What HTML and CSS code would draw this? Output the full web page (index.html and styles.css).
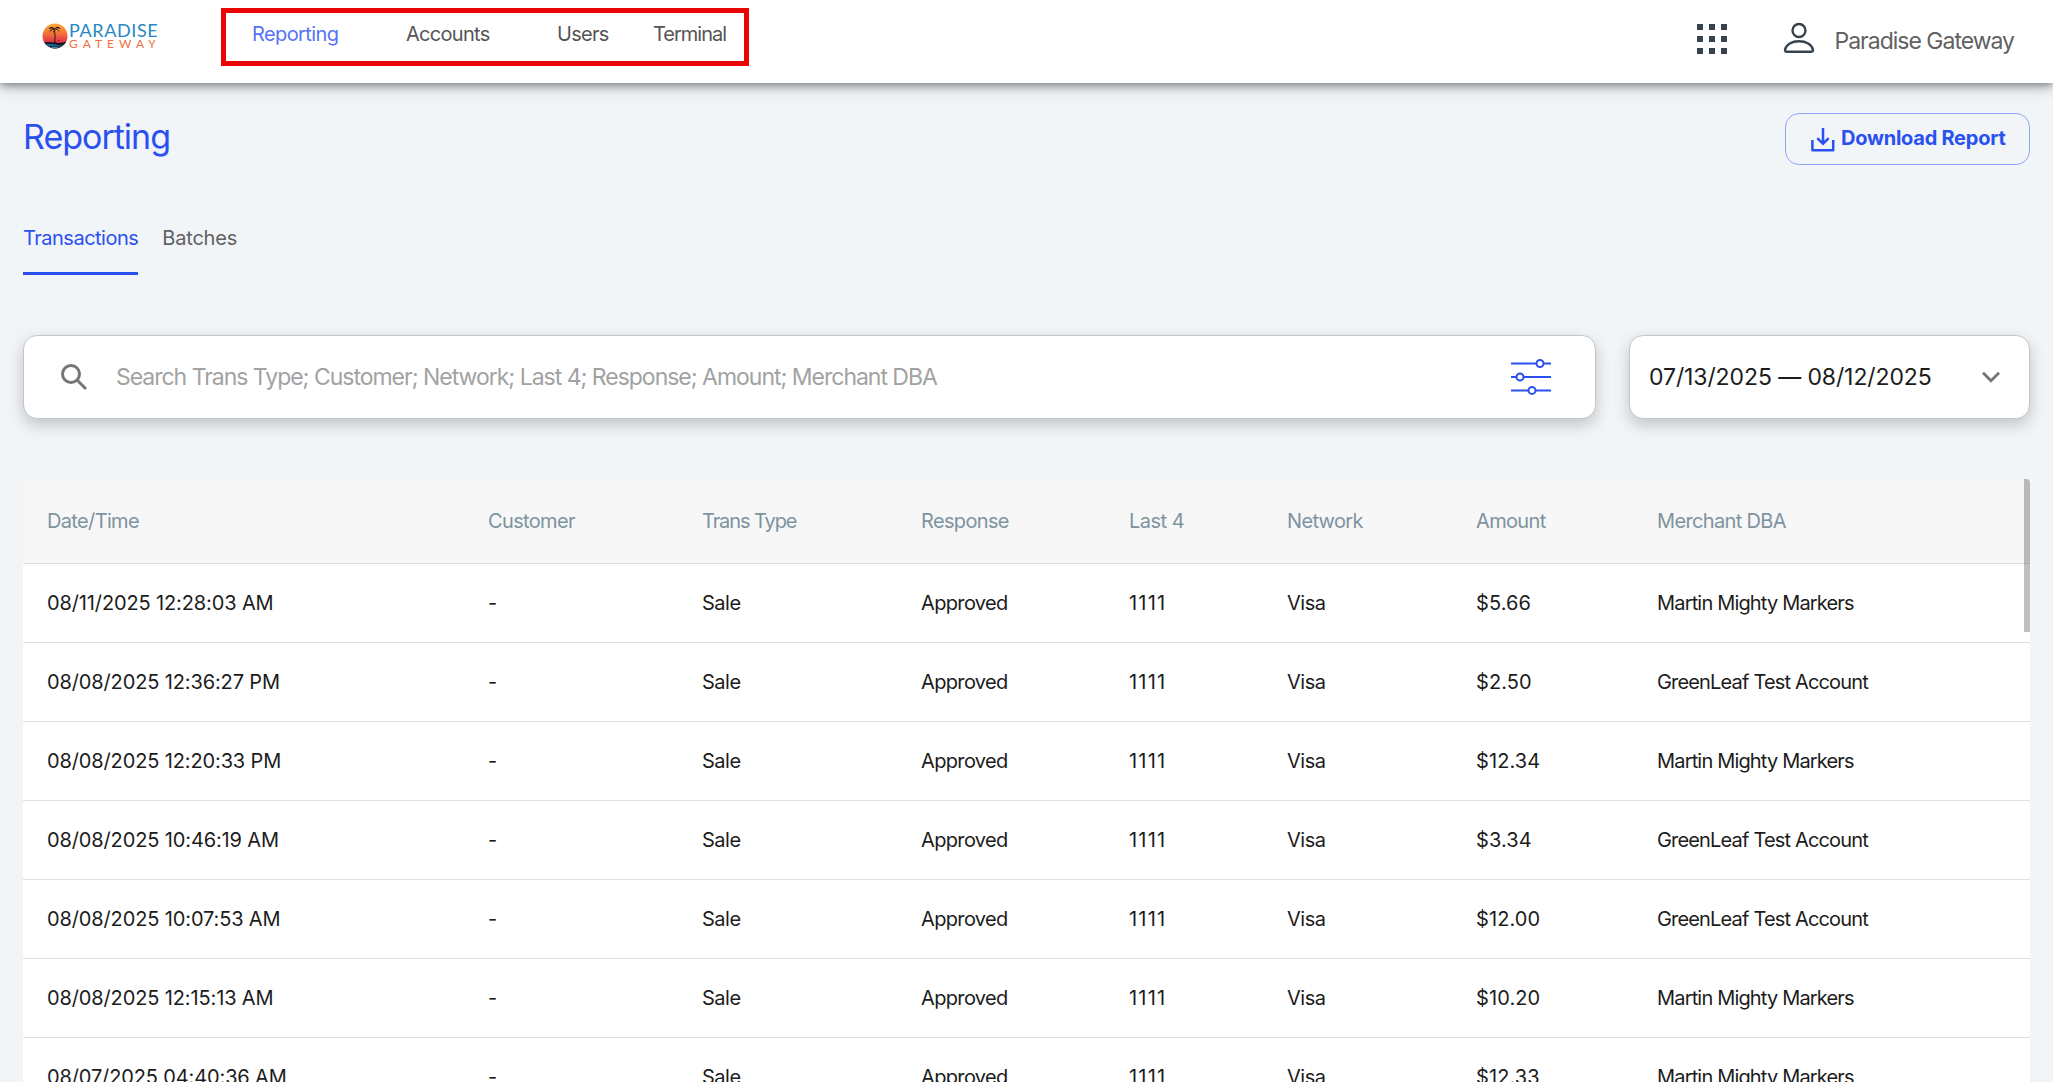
FILE: index.html
```
<!DOCTYPE html>
<html lang="en">
<head>
	<meta charset="UTF-8">
	<title>Reporting</title>
	<link rel="stylesheet" href="styles.css">
</head>
<body>
	<header class="header">
		<div class="logo">
			<svg width="26" height="26" viewBox="0 0 26 26">
				<defs>
					<linearGradient id="sun" x1="0" y1="0" x2="0" y2="1">
						<stop offset="0" stop-color="#fbb034"/>
						<stop offset="0.45" stop-color="#f26a3a"/>
						<stop offset="0.8" stop-color="#e0234e"/>
					</linearGradient>
					<clipPath id="round"><circle cx="13" cy="13" r="12.5"/></clipPath>
				</defs>
				<g clip-path="url(#round)">
					<rect width="26" height="26" fill="url(#sun)"/>
					<path d="M0 19.5Q7 18.5 13 19.6T26 18V26H0z" fill="#101820"/>
					<path d="M2 21.5Q9 20 14 21.5T24 21L19 23.5H5z" fill="#1d5f86"/>
					<path d="M8 24H17L13 26z" fill="#3d8fb8"/>
					<path d="M17 26L26 19V26zM0 20L7 26H0z" fill="#fff"/>
				</g>
				<path d="M12.8 19.5Q13.6 13 12.4 6" fill="none" stroke="#1c1416" stroke-width="0.9"/>
				<path d="M12.5 5.500Q9 2.500 6.500 6Q10 5 12.500 6Q8 6 7.500 9Q10 7 12.500 6.200Q11 8 11.500 10Q13 8 12.700 6.200Q16 6.500 17.500 9Q17 6 12.700 5.800Q15.500 4.500 18.500 6Q16 2 12.500 5.500z" fill="#1c1416"/>
				<path d="M12 19.500L12.600 17L13.500 19.500zM16.500 17h.8v.8h-.8z" fill="#1c1416"/>
			</svg>
			<div class="logo-text">
				<span class="logo-top">PARADISE</span>
				<span class="logo-bottom">GATEWAY</span>
			</div>
		</div>
		<nav class="nav">
			<a class="nav-reporting current">Reporting</a>
			<a class="nav-accounts">Accounts</a>
			<a class="nav-users">Users</a>
			<a class="nav-terminal">Terminal</a>
		</nav>
		<div class="user">
			<svg class="apps" width="30" height="30" viewBox="0 0 30 30" fill="#36434e">
				<path d="M0 0h6v6H0zM12 0h6v6h-6zM24 0h6v6h-6zM0 12h6v6H0zM12 12h6v6h-6zM24 12h6v6h-6zM0 24h6v6H0zM12 24h6v6h-6zM24 24h6v6h-6z"/>
			</svg>
			<svg class="person" width="32" height="32" viewBox="0 0 32 32" fill="none" stroke="#36434e" stroke-width="2.4">
				<circle cx="16" cy="8.500" r="6.500"/>
				<path d="M4 29.800H28Q30 29.800 30 28C29 22.500 23 19.300 16 19.300S3 22.500 2 28Q2 29.800 4 29.800z"/>
			</svg>
			<span class="user-name">Paradise Gateway</span>
		</div>
	</header>

	<main class="main">
		<div class="title-row">
			<h1>Reporting</h1>
			<button class="download">
				<svg width="24" height="24" viewBox="0 0 24 24" fill="none" stroke="#2a50f0" stroke-width="2.500">
					<path d="M1.400 12V22.300H22.200V12" stroke-linejoin="round"/>
					<path d="M12 0V15.500M6.300 10.200L12 15.700L17.700 10.200"/>
				</svg>
				<span>Download Report</span>
			</button>
		</div>

		<div class="tabs">
			<a class="current">Transactions</a>
			<a class="batches">Batches</a>
		</div>

		<div class="filters">
			<div class="search">
				<svg class="search-icon" width="28" height="28" viewBox="0 0 28 28" fill="none" stroke="#757575" stroke-width="3">
					<circle cx="11" cy="11" r="8.500"/>
					<path d="M16.800 16.800L26 26"/>
				</svg>
				<span class="placeholder">Search Trans Type; Customer; Network; Last 4; Response; Amount; Merchant DBA</span>
				<svg class="sliders" width="40" height="40" viewBox="0 0 40 40" fill="#fff" stroke="#2a50f0" stroke-width="2">
					<path d="M0 6.500H40M0 20H40M0 33.400H40"/>
					<circle cx="29" cy="6.500" r="3.500"/>
					<circle cx="9" cy="20" r="3.500"/>
					<circle cx="21" cy="33.400" r="3.500"/>
				</svg>
			</div>
			<div class="dates">
				<span>07/13/2025 — 08/12/2025</span>
				<svg width="18" height="12" viewBox="0 0 18 12" fill="none" stroke="#757575" stroke-width="2.800">
					<path d="M1 1.800L9 9.800L17 1.800"/>
				</svg>
			</div>
		</div>

		<div class="table-box">
			<table>
				<colgroup>
					<col class="c-date">
					<col class="c-customer">
					<col class="c-type">
					<col class="c-response">
					<col class="c-last">
					<col class="c-network">
					<col class="c-amount">
					<col>
				</colgroup>
				<thead>
					<tr><th>Date/Time</th><th>Customer</th><th class="type">Trans Type</th><th>Response</th><th class="last">Last 4</th><th>Network</th><th>Amount</th><th>Merchant DBA</th></tr>
				</thead>
				<tbody>
					<tr><td>08/11/2025 12:28:03 AM</td><td>-</td><td>Sale</td><td>Approved</td><td class="last">1111</td><td>Visa</td><td class="amount">$5.66</td><td>Martin Mighty Markers</td></tr>
					<tr><td>08/08/2025 12:36:27 PM</td><td>-</td><td>Sale</td><td>Approved</td><td class="last">1111</td><td>Visa</td><td class="amount">$2.50</td><td>GreenLeaf Test Account</td></tr>
					<tr><td>08/08/2025 12:20:33 PM</td><td>-</td><td>Sale</td><td>Approved</td><td class="last">1111</td><td>Visa</td><td class="amount">$12.34</td><td>Martin Mighty Markers</td></tr>
					<tr><td>08/08/2025 10:46:19 AM</td><td>-</td><td>Sale</td><td>Approved</td><td class="last">1111</td><td>Visa</td><td class="amount">$3.34</td><td>GreenLeaf Test Account</td></tr>
					<tr><td>08/08/2025 10:07:53 AM</td><td>-</td><td>Sale</td><td>Approved</td><td class="last">1111</td><td>Visa</td><td class="amount">$12.00</td><td>GreenLeaf Test Account</td></tr>
					<tr><td>08/08/2025 12:15:13 AM</td><td>-</td><td>Sale</td><td>Approved</td><td class="last">1111</td><td>Visa</td><td class="amount">$10.20</td><td>Martin Mighty Markers</td></tr>
					<tr><td>08/07/2025 04:40:36 AM</td><td>-</td><td>Sale</td><td>Approved</td><td class="last">1111</td><td>Visa</td><td class="amount">$12.33</td><td>Martin Mighty Markers</td></tr>
				</tbody>
			</table>
			<div class="scrollbar"></div>
		</div>
	</main>
</body>
</html>
```
FILE: styles.css
```
* {
	box-sizing: border-box;
}
body, h1, table {
	margin: 0;
	padding: 0;
}
body {
	display: flex;
	flex-direction: column;
	height: 1082px;
	overflow: hidden;
	font: 20px/24px Inter, "Liberation Sans", sans-serif;
	letter-spacing: -0.5px;
	color: #1c1c1c;
	background: #f1f5f8;
}
svg {
	display: block;
	flex: none;
}

/* header */
.header {
	position: relative;
	display: flex;
	align-items: flex-start;
	flex: none;
	height: 83px;
	padding: 8px 39px 0 42px;
	background: #fff;
	box-shadow: 0 4px 16px rgba(0, 0, 0, 0.2), 0 2px 8px rgba(0, 0, 0, 0.4);
}
.logo {
	display: flex;
	gap: 1px;
	width: 179px;
	padding-top: 15px;
}
.logo-text {
	display: flex;
	flex-direction: column;
	font-family: Lato, sans-serif;
}
.logo-top {
	font-size: 18px;
	line-height: 15px;
	letter-spacing: 0.6px;
	color: #2a86c4;
}
.logo-bottom {
	font-size: 12px;
	line-height: 12px;
	letter-spacing: 5px;
	color: #f2703f;
}
.nav {
	display: flex;
	width: 528px;
	height: 58px;
	padding: 9px 0 0 26px;
	border: 5px solid #ea0606;
	color: #555;
}
.nav .current {
	color: #5573f3;
}
.nav-reporting {
	width: 154px;
	letter-spacing: -0.6px;
}
.nav-accounts {
	width: 151px;
	letter-spacing: -0.7px;
}
.nav-users {
	width: 96px;
	letter-spacing: -0.7px;
}
.nav-terminal {
	letter-spacing: -1px;
}
.user {
	display: flex;
	align-items: flex-start;
	margin-left: auto;
}
.apps {
	margin: 16px 56px 0 0;
}
.person {
	margin: 14px 19px 0 0;
}
.user-name {
	padding-top: 21px;
	font-size: 23px;
	letter-spacing: -1px;
	color: #616161;
}

/* page title */
.main {
	display: flex;
	flex-direction: column;
	flex: 1;
	padding: 30px 23px 0;
}
.title-row {
	display: flex;
	justify-content: space-between;
	align-items: flex-start;
	height: 113px;
}
h1 {
	font-size: 34px;
	line-height: 48px;
	font-weight: 400;
	letter-spacing: -1px;
	color: #2a50f0;
}
.download {
	display: flex;
	align-items: center;
	gap: 6px;
	width: 245px;
	height: 52px;
	padding: 0 0 2px 25px;
	border: 1px solid #8ea3f6;
	border-radius: 14px;
	background: none;
	color: #2a50f0;
	font: 700 20px Inter, sans-serif;
	letter-spacing: -0.25px;
	white-space: nowrap;
}
.download svg {
	margin-top: 3px;
}

/* tabs */
.tabs {
	display: flex;
	align-items: flex-start;
	gap: 24px;
	height: 109px;
}
.tabs a {
	height: 49px;
	color: #616161;
	letter-spacing: -0.5px;
}
.tabs .current {
	border-bottom: 3px solid #2a50f0;
	color: #2a50f0;
}
.tabs .batches {
	letter-spacing: -0.2px;
}

/* search and dates */
.filters {
	display: flex;
	gap: 33px;
	height: 84px;
	margin-bottom: 60px;
}
.search, .dates {
	display: flex;
	align-items: center;
	border: 1px solid #c3c5c7;
	border-radius: 14px;
	background: #fff;
	box-shadow: 0 6px 16px rgba(0, 0, 0, 0.2);
}
.search {
	flex: 1;
	padding: 0 44px 0 36px;
}
.placeholder {
	margin: 0 auto 0 28px;
	font-size: 23px;
	letter-spacing: -1.02px;
	color: #a2a2a2;
}
.dates {
	justify-content: space-between;
	width: 401px;
	padding: 0 29px 0 19px;
	font-size: 23px;
	letter-spacing: -0.1px;
}

/* transactions table */
.table-box {
	position: relative;
	flex: 1;
	overflow: hidden;
	border-radius: 4px 4px 0 0;
	background: #fff;
}
/* corners of the box at the bottom of the window */
.table-box::before, .table-box::after {
	content: "";
	position: absolute;
	bottom: 0;
	left: 0;
	width: 4px;
	height: 4px;
	background: linear-gradient(45deg, #a9adb0 50%, transparent 50%);
}
.table-box::after {
	left: auto;
	right: 0;
	transform: scaleX(-1);
}
table {
	width: 100%;
	table-layout: fixed;
	border-collapse: collapse;
}
th, td {
	height: 79px;
	padding: 0 0 0 24px;
	border-bottom: 1px solid #dedede;
	text-align: left;
	white-space: nowrap;
}
th {
	height: 84px;
	padding-top: 1px;
	background: #f7f7f7;
	color: #7e93a0;
	font-weight: 400;
	letter-spacing: -0.65px;
}
th.type {
	letter-spacing: -1.1px;
}
th.last {
	letter-spacing: -0.5px;
}
td:first-child {
	letter-spacing: -0.13px;
}
td:last-child {
	letter-spacing: -0.83px;
}
td:nth-child(4) {
	letter-spacing: -0.65px;
}
td.last {
	letter-spacing: 1.2px;
}
td.amount {
	letter-spacing: 0.1px;
}
.c-date {
	width: 441px;
}
.c-customer {
	width: 214px;
}
.c-type {
	width: 219px;
}
.c-response {
	width: 208px;
}
.c-last {
	width: 158px;
}
.c-network {
	width: 189px;
}
.c-amount {
	width: 181px;
}
.scrollbar {
	position: absolute;
	top: 0;
	right: 0;
	width: 6px;
	height: 153px;
	background: rgba(0, 0, 0, 0.25);
}
```
